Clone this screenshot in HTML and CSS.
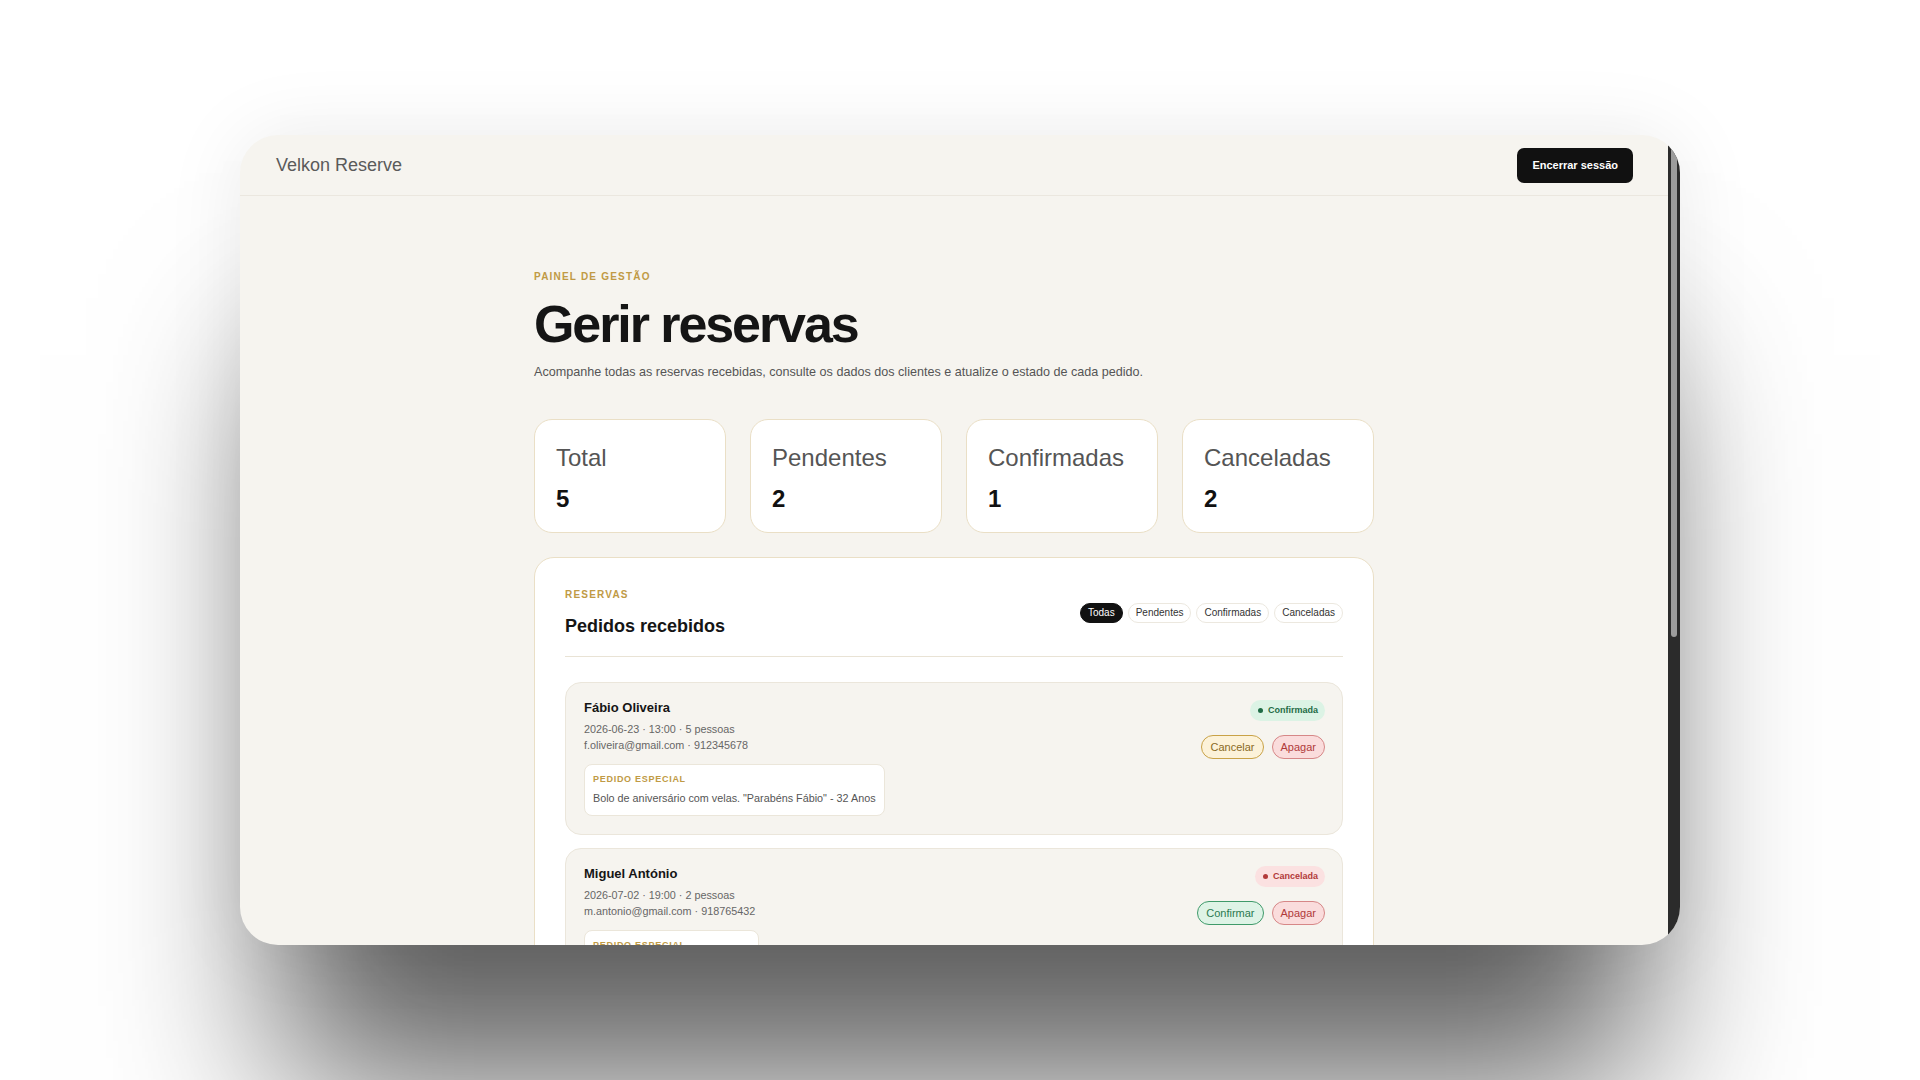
FILE: index.html
```html
<!DOCTYPE html>
<html lang="pt">
<head>
<meta charset="utf-8">
<title>Velkon Reserve — Gerir reservas</title>
<link rel="stylesheet" href="styles.css">
</head>
<body>
<div class="stage">
  <div class="window">
    <div class="viewport">
      <header class="topbar">
        <span class="brand">Velkon Reserve</span>
        <button class="btn-logout" type="button">Encerrar sessão</button>
      </header>

      <main class="content">
        <p class="eyebrow">PAINEL DE GESTÃO</p>
        <h1 class="title">Gerir reservas</h1>
        <p class="lead">Acompanhe todas as reservas recebidas, consulte os dados dos clientes e atualize o estado de cada pedido.</p>

        <section class="stats">
          <div class="stat"><span class="stat-label">Total</span><span class="stat-value">5</span></div>
          <div class="stat"><span class="stat-label">Pendentes</span><span class="stat-value">2</span></div>
          <div class="stat"><span class="stat-label">Confirmadas</span><span class="stat-value">1</span></div>
          <div class="stat"><span class="stat-label">Canceladas</span><span class="stat-value">2</span></div>
        </section>

        <section class="panel">
          <div class="panel-head">
            <div class="panel-heading">
              <p class="eyebrow eyebrow-panel">RESERVAS</p>
              <h2 class="panel-title">Pedidos recebidos</h2>
            </div>
            <div class="filters">
              <button class="pill pill-active" type="button">Todas</button>
              <button class="pill" type="button">Pendentes</button>
              <button class="pill" type="button">Confirmadas</button>
              <button class="pill" type="button">Canceladas</button>
            </div>
          </div>

          <div class="list">
            <article class="res">
              <div class="res-main">
                <h3 class="res-name">Fábio Oliveira</h3>
                <p class="res-meta">2026-06-23 · 13:00 · 5 pessoas</p>
                <p class="res-meta">f.oliveira@gmail.com · 912345678</p>
                <div class="note">
                  <span class="note-label">PEDIDO ESPECIAL</span>
                  <p class="note-text">Bolo de aniversário com velas. "Parabéns Fábio" - 32 Anos</p>
                </div>
              </div>
              <div class="res-side">
                <span class="badge badge-ok">Confirmada</span>
                <div class="actions">
                  <button class="act act-cancel" type="button">Cancelar</button>
                  <button class="act act-delete" type="button">Apagar</button>
                </div>
              </div>
            </article>

            <article class="res">
              <div class="res-main">
                <h3 class="res-name">Miguel António</h3>
                <p class="res-meta">2026-07-02 · 19:00 · 2 pessoas</p>
                <p class="res-meta">m.antonio@gmail.com · 918765432</p>
                <div class="note">
                  <span class="note-label">PEDIDO ESPECIAL</span>
                  <p class="note-text">Mesa junto à janela, se possível.</p>
                </div>
              </div>
              <div class="res-side">
                <span class="badge badge-off">Cancelada</span>
                <div class="actions">
                  <button class="act act-confirm" type="button">Confirmar</button>
                  <button class="act act-delete" type="button">Apagar</button>
                </div>
              </div>
            </article>

            <article class="res">
              <div class="res-main">
                <h3 class="res-name">Ana Ferreira</h3>
                <p class="res-meta">2026-07-10 · 20:30 · 4 pessoas</p>
                <p class="res-meta">ana.ferreira@gmail.com · 913456789</p>
              </div>
              <div class="res-side">
                <span class="badge badge-wait">Pendente</span>
                <div class="actions">
                  <button class="act act-confirm" type="button">Confirmar</button>
                  <button class="act act-cancel" type="button">Cancelar</button>
                  <button class="act act-delete" type="button">Apagar</button>
                </div>
              </div>
            </article>

            <article class="res">
              <div class="res-main">
                <h3 class="res-name">Rui Costa</h3>
                <p class="res-meta">2026-07-14 · 12:30 · 3 pessoas</p>
                <p class="res-meta">rui.costa@gmail.com · 916543210</p>
              </div>
              <div class="res-side">
                <span class="badge badge-wait">Pendente</span>
                <div class="actions">
                  <button class="act act-confirm" type="button">Confirmar</button>
                  <button class="act act-cancel" type="button">Cancelar</button>
                  <button class="act act-delete" type="button">Apagar</button>
                </div>
              </div>
            </article>

            <article class="res">
              <div class="res-main">
                <h3 class="res-name">Sofia Martins</h3>
                <p class="res-meta">2026-07-20 · 21:00 · 6 pessoas</p>
                <p class="res-meta">sofia.martins@gmail.com · 919876543</p>
              </div>
              <div class="res-side">
                <span class="badge badge-off">Cancelada</span>
                <div class="actions">
                  <button class="act act-confirm" type="button">Confirmar</button>
                  <button class="act act-delete" type="button">Apagar</button>
                </div>
              </div>
            </article>
          </div>
        </section>
      </main>
    </div>
    <div class="scrollbar" aria-hidden="true">
      <div class="scrollbar-thumb"></div>
    </div>
  </div>
</div>
</body>
</html>
```

FILE: styles.css
```css
* { box-sizing: border-box; }

html, body {
  margin: 0;
  height: 100%;
}

body {
  background: #ffffff;
  font-family: "Liberation Sans", Arial, sans-serif;
  color: #1a1a1a;
}

button {
  font-family: inherit;
  cursor: pointer;
}

p, h1, h2, h3 { margin: 0; }

.stage {
  height: 100vh;
  display: flex;
  align-items: center;
  justify-content: center;
}

.window {
  width: 1440px;
  height: 810px;
  display: flex;
  border-radius: 38px;
  overflow: hidden;
  background: #f6f4ef;
  box-shadow:
    0 180px 160px -40px rgba(0, 0, 0, 0.62),
    0 0 80px rgba(0, 0, 0, 0.08);
}

.viewport {
  flex: 1;
  min-width: 0;
  overflow: hidden;
}

.scrollbar {
  width: 12px;
  flex: none;
  padding: 0 3px;
  background: #2b2b2b;
}

.scrollbar-thumb {
  height: 502px;
  background: #9c9c9c;
  border-radius: 0 0 3px 3px;
}

/* top bar */
.topbar {
  height: 61px;
  padding: 0 35px 0 36px;
  display: flex;
  align-items: center;
  justify-content: space-between;
  border-bottom: 1px solid #ebe7df;
}

.brand {
  font-size: 18px;
  color: #5a5a5a;
}

.btn-logout {
  height: 35px;
  padding: 0 15px;
  border: 0;
  border-radius: 7px;
  background: #111111;
  color: #ffffff;
  font-size: 11px;
  font-weight: 700;
}

/* main */
.content {
  max-width: 840px;
  margin: 0 auto;
  padding: 75px 0 70px;
}

.eyebrow {
  font-size: 10px;
  line-height: 12px;
  font-weight: 700;
  letter-spacing: 0.12em;
  color: #c09a45;
}

.title {
  margin-top: 13px;
  font-size: 52px;
  line-height: 1.1;
  font-weight: 700;
  letter-spacing: -0.04em;
  color: #151515;
}

.lead {
  margin-top: 10px;
  font-size: 12.6px;
  line-height: 18px;
  color: #555555;
}

.stats {
  margin-top: 38px;
  display: grid;
  grid-template-columns: repeat(4, 1fr);
  gap: 24px;
}

.stat {
  display: flex;
  flex-direction: column;
  gap: 13px;
  padding: 24px 21px 19px;
  background: #ffffff;
  border: 1px solid #eadfc6;
  border-radius: 18px;
}

.stat-label {
  font-size: 24px;
  line-height: 28px;
  color: #555555;
}

.stat-value {
  font-size: 24px;
  line-height: 28px;
  font-weight: 700;
  color: #111111;
}

/* panel */
.panel {
  margin-top: 24px;
  padding: 31px 30px 30px;
  background: #ffffff;
  border: 1px solid #eadfc6;
  border-radius: 20px;
}

.panel-head {
  display: flex;
  align-items: center;
  justify-content: space-between;
  padding-bottom: 19px;
  border-bottom: 1px solid #e9e3d5;
}

.panel-title {
  margin-top: 14px;
  font-size: 18px;
  line-height: 22px;
  font-weight: 700;
  color: #151515;
}

.filters {
  display: flex;
  gap: 5px;
}

.pill {
  padding: 3px 7px;
  font-size: 10px;
  line-height: 12px;
  color: #333333;
  background: #ffffff;
  border: 1px solid #ece8df;
  border-radius: 999px;
}

.pill-active {
  background: #111111;
  border-color: #111111;
  color: #ffffff;
}

.list {
  margin-top: 25px;
  display: flex;
  flex-direction: column;
  gap: 13px;
}

.res {
  display: flex;
  justify-content: space-between;
  align-items: flex-start;
  padding: 17px 17px 18px 18px;
  background: #f6f4ef;
  border: 1px solid #ebe6db;
  border-radius: 16px;
}

.res-main {
  display: flex;
  flex-direction: column;
  align-items: flex-start;
}

.res-name {
  font-size: 13px;
  line-height: 16px;
  font-weight: 700;
  color: #151515;
  margin-bottom: 5px;
}

.res-meta {
  font-size: 10.8px;
  line-height: 16px;
  color: #666666;
}

.note {
  margin-top: 11px;
  padding: 8px 8px 9px;
  background: #ffffff;
  border: 1px solid #ebe6da;
  border-radius: 8px;
}

.note-label {
  display: block;
  font-size: 9px;
  line-height: 12px;
  font-weight: 700;
  letter-spacing: 0.08em;
  color: #c09a45;
}

.note-text {
  margin-top: 5px;
  font-size: 10.8px;
  line-height: 16px;
  color: #555555;
}

.res-side {
  display: flex;
  flex-direction: column;
  align-items: flex-end;
  gap: 14px;
}

.badge {
  display: inline-flex;
  align-items: center;
  gap: 5px;
  padding: 4px 7px 4px 8px;
  font-size: 9px;
  line-height: 13px;
  font-weight: 700;
  border-radius: 999px;
}

.badge::before {
  content: "";
  width: 5px;
  height: 5px;
  border-radius: 50%;
  background: currentColor;
}

.badge-ok { background: #dcf3e5; color: #1f6b45; }
.badge-off { background: #fbe1e1; color: #b23a3a; }
.badge-wait { background: #fbf0d4; color: #94701f; }

.actions {
  display: flex;
  gap: 8px;
}

.act {
  padding: 4px 8px;
  font-size: 11px;
  line-height: 14px;
  border-radius: 999px;
  border: 1px solid;
}

.act-cancel { background: #fcf2d9; border-color: #c9a247; color: #8a6a1e; }
.act-delete { background: #fadcdc; border-color: #d68787; color: #b03a3a; }
.act-confirm { background: #def3e6; border-color: #3f9a6a; color: #2b7a50; }
```
